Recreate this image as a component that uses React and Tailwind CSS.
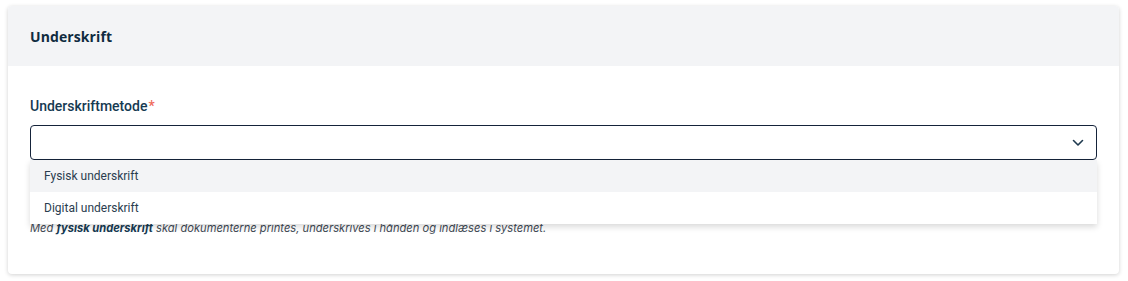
import React from "react";

export default function App() {
  return (
    <div className="w-[1128px] h-[281px] bg-white px-2 pt-[6px] pb-[7px]">
      <div className="w-[1111px] h-[268px] rounded-[4px] bg-white shadow-[0_1px_4px_rgba(0,0,0,0.18)] overflow-hidden flex flex-col">
        <div className="h-[60px] bg-[#f3f4f6] flex items-center px-[22px]">
          <h2 className="font-['Open_Sans',sans-serif] font-bold text-[14px] text-[#0f2b40] tracking-[0.1px]">Underskrift</h2>
        </div>
        <div className="px-[22px] pt-[32px] relative">
          <label className="block font-['Roboto',sans-serif] font-medium text-[14px] leading-[16px] text-[#163a52]">
            Underskriftmetode<span className="text-[#ef6a5a] ml-[1px]">*</span>
          </label>
          <div className="relative mt-[11px]">
            <div className="h-[35px] w-full rounded-[4px] border border-[#15233a] bg-white flex items-center justify-end pr-[12px]">
              <svg width="12" height="8" viewBox="0 0 12 8" fill="none">
                <path d="M1.5 1.5L6 6L10.5 1.5" stroke="#1f3a4f" strokeWidth="1.6" strokeLinecap="round" strokeLinejoin="round" />
              </svg>
            </div>
            <div className="absolute left-0 right-0 top-[35px] z-10 bg-white shadow-[0_3px_6px_rgba(0,0,0,0.15)] font-['Roboto',sans-serif] text-[12px] text-[#2a3d4f]">
              <div className="h-[32px] bg-[#f3f4f6] flex items-center px-[14px]">Fysisk underskrift</div>
              <div className="h-[32px] bg-white flex items-center px-[14px]">Digital underskrift</div>
            </div>
          </div>
          <p className="mt-[61px] font-['Inter',sans-serif] italic text-[11.15px] leading-[14px] text-[#3f4a55]">
            Med <span className="font-bold text-[#163a52]">fysisk underskrift</span> skal dokumenterne printes, underskrives i hånden og indlæses i systemet.
          </p>
        </div>
      </div>
    </div>
  );
}
